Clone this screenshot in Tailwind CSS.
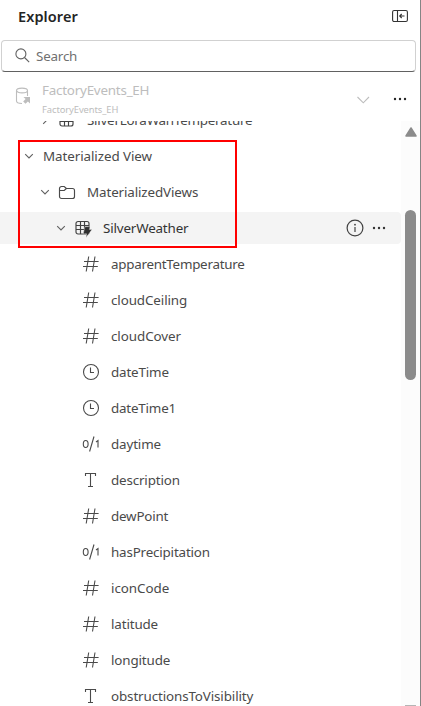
<!DOCTYPE html>
<html lang="en">
<head>
<meta charset="utf-8">
<title>Explorer</title>
<script src="https://cdn.jsdelivr.net/npm/@tailwindcss/browser@4"></script>
</head>
<body class="bg-white">
<svg class="hidden">
  <symbol id="hash" viewBox="0 0 18 18"><path d="M6.7 1.5 4.2 16.5M13 1.5 10.5 16.5M2 6.5H16.6M1 11.5H15.8" fill="none" stroke="currentColor" stroke-width="1.1"/></symbol>
  <symbol id="clock" viewBox="0 0 18 18"><circle cx="9" cy="9" r="7.5" fill="none" stroke="currentColor" stroke-width="1.1"/><path d="M8.5 4.5V9.5H12" fill="none" stroke="currentColor" stroke-width="1.1"/></symbol>
  <symbol id="bool" viewBox="0 0 18 18"><path d="M12 1.5 7.6 16.5M14 7 16 5.5V12.5" fill="none" stroke="currentColor" stroke-width="1.1"/><ellipse cx="3.7" cy="9" rx="2.4" ry="3.5" fill="none" stroke="currentColor" stroke-width="1.1"/></symbol>
  <symbol id="text" viewBox="0 0 18 18"><path d="M3.5 5V2.5H13.5V5M8.5 2.5V15.5M6 15.5H11" fill="none" stroke="currentColor" stroke-width="1.1"/></symbol>
  <symbol id="chev" viewBox="0 0 10 10"><path d="M1.2 3.2 5 7 8.8 3.2" fill="none" stroke="#616161" stroke-width="1.1"/></symbol>
  <symbol id="grid" viewBox="0 0 16 16"><path d="M3 1.5H12A2 2 0 0 1 14 3.5V12A2 2 0 0 1 12 14H3A2 2 0 0 1 1 12V3.5A2 2 0 0 1 3 1.5ZM5.5 1.5V14M9.5 1.5V14M1 5.5H14M1 9.5H14" fill="none" stroke="#424242" stroke-width="1.15"/></symbol>
  <symbol id="dots" viewBox="0 0 14 4"><circle cx="2" cy="2" r="1.2" fill="currentColor"/><circle cx="7" cy="2" r="1.2" fill="currentColor"/><circle cx="12" cy="2" r="1.2" fill="currentColor"/></symbol>
</svg>
<div class="relative flex h-[706px] w-[421px] flex-col overflow-hidden border-r border-[#858585] bg-white font-['Noto_Sans','Open_Sans',sans-serif] text-[13.4px] text-[#4a4a4a]">
  <header class="flex h-10 shrink-0 items-start justify-between pt-[6px] pr-[12px] pl-[18px]">
    <h1 class="text-[14.5px] leading-[20px] font-semibold tracking-[0.1px] whitespace-nowrap text-[#242424]">Explorer</h1>
    <svg class="mt-[3px] h-[14px] w-[16px]" viewBox="0 0 16 14" fill="none" stroke="#333" stroke-width="1.1"><rect x=".6" y="1.5" width="14.8" height="11" rx="1.5"/><path d="M5.5 1.5V12.5M12.5 7H8M9.7 5 7.7 7 9.7 9"/></svg>
  </header>
  <div class="ml-px flex h-8 w-[415px] shrink-0 items-center rounded-[4px] border border-[#d1d1d1] border-b-[#616161] pl-[13px] text-[#707070]">
    <svg class="h-4 w-4" viewBox="0 0 16 16" fill="none" stroke="#616161" stroke-width="1.1"><circle cx="5.9" cy="5.9" r="5"/><path d="M9.5 9.5 14.2 14.2"/></svg>
    <span class="ml-[5px] tracking-[-0.2px]">Search</span>
  </div>
  <div class="flex h-[49px] shrink-0 items-start pl-[15px] text-[#bdbdbd]">
    <svg class="mt-[15px] h-[18px] w-4" viewBox="0 0 16 18" fill="none" stroke="#bdbdbd" stroke-width="1.1"><ellipse cx="7" cy="3.5" rx="5.5" ry="2.4"/><path d="M1.5 3.5V14C1.5 15.4 4 16.5 7 16.5M12.5 3.5V9"/><path d="M8.5 10H15V16.5L12.9 14.4 10.5 16.8 8.2 14.5 10.6 12.1Z" fill="#bdbdbd" stroke="none"/></svg>
    <div class="ml-[11px] flex w-[300px] flex-col pt-[8px] whitespace-nowrap">
      <span class="h-[20px] leading-[20px] tracking-[-0.22px]">FactoryEvents_EH</span>
      <span class="mt-[3px] text-[9.4px] leading-[13px] tracking-[-0.08px]">FactoryEvents_EH</span>
    </div>
    <svg class="mt-[20px] ml-[14px] h-[16px] w-[15px]" viewBox="0 0 15 16" fill="none" stroke="#bdbdbd" stroke-width="1.1"><path d="M1.5 5 7.3 10.8 13 5"/></svg>
    <svg class="mt-[25px] ml-[22px] h-1 w-[14px] text-[#242424]"><use href="#dots"/></svg>
  </div>
  <main class="flex min-h-0 flex-1">
    <div class="w-[401px] shrink-0 overflow-hidden">
      <div class="-mt-[17px] flex flex-col gap-1 whitespace-nowrap *:h-8 *:shrink-0 *:items-center">
        <div class="flex pl-[40px]"><svg class="h-[10px] w-[10px] -rotate-90"><use href="#chev"/></svg><svg class="ml-[9px] h-4 w-4"><use href="#grid"/></svg><span class="ml-[12px] tracking-[-0.24px]">SilverLoraWanTemperature</span></div>
        <div class="flex pl-[24px]"><svg class="h-[10px] w-[10px]"><use href="#chev"/></svg><span class="ml-[9px] tracking-[-0.08px]">Materialized View</span></div>
        <div class="flex pl-[40px]"><svg class="h-[10px] w-[10px]"><use href="#chev"/></svg><svg class="ml-[8px] h-[17px] w-[18px]" viewBox="0 0 18 17" fill="none" stroke="currentColor" stroke-width="1.15"><path d="M1.5 4.5A2 2 0 0 1 3.5 2.5H6.2L8.4 4.5H14.5A2 2 0 0 1 16.5 6.5V12.5A2 2 0 0 1 14.5 14.5H3.5A2 2 0 0 1 1.5 12.5ZM1.5 6.5H6.2L8.4 4.5"/></svg><span class="ml-[11px] tracking-[-0.12px]">MaterializedViews</span></div>
        <div class="flex rounded-r-[4px] bg-[#f4f4f4] pl-[56px] text-[#333]"><svg class="h-[10px] w-[10px]"><use href="#chev"/></svg><span class="relative ml-[9px] h-4 w-[18px]"><svg class="h-4 w-4"><use href="#grid"/></svg><svg class="absolute top-[6px] left-[7px] h-[12px] w-[10px]" viewBox="0 0 10 12"><path d="M3 .6H8L7.3 3.6H10L4 11.6 4.6 7.8H1.2Z" fill="#303030" stroke="#f4f4f4" stroke-width=".4"/></svg></span><span class="ml-[10px] w-[200px] tracking-[-0.17px]">SilverWeather</span><svg class="ml-[42px] h-[20px] w-[20px] text-[#424242]" viewBox="0 0 20 20"><circle cx="10" cy="10" r="7.9" fill="none" stroke="currentColor" stroke-width="1.2"/><path d="M10 9V14" stroke="currentColor" stroke-width="1.2"/><circle cx="10" cy="6.7" r=".9" fill="currentColor"/></svg><svg class="ml-[7px] h-1 w-[14px]"><use href="#dots"/></svg></div>
        <div class="flex pl-[82px]"><svg class="h-[18px] w-[18px]"><use href="#hash"/></svg><span class="ml-[11px] tracking-[-0.26px]">apparentTemperature</span></div>
        <div class="flex pl-[82px]"><svg class="h-[18px] w-[18px]"><use href="#hash"/></svg><span class="ml-[11px] tracking-[-0.1px]">cloudCeiling</span></div>
        <div class="flex pl-[82px]"><svg class="h-[18px] w-[18px]"><use href="#hash"/></svg><span class="ml-[11px] tracking-[-0.06px]">cloudCover</span></div>
        <div class="flex pl-[82px]"><svg class="h-[18px] w-[18px]"><use href="#clock"/></svg><span class="ml-[11px] tracking-[-0.16px]">dateTime</span></div>
        <div class="flex pl-[82px]"><svg class="h-[18px] w-[18px]"><use href="#clock"/></svg><span class="ml-[11px] tracking-[-0.2px]">dateTime1</span></div>
        <div class="flex pl-[82px]"><svg class="h-[18px] w-[18px]"><use href="#bool"/></svg><span class="ml-[11px] tracking-[-0.14px]">daytime</span></div>
        <div class="flex pl-[82px]"><svg class="h-[18px] w-[18px]"><use href="#text"/></svg><span class="ml-[11px] tracking-[-0.16px]">description</span></div>
        <div class="flex pl-[82px]"><svg class="h-[18px] w-[18px]"><use href="#hash"/></svg><span class="ml-[11px] tracking-[-0.2px]">dewPoint</span></div>
        <div class="flex pl-[82px]"><svg class="h-[18px] w-[18px]"><use href="#bool"/></svg><span class="ml-[11px] tracking-[-0.18px]">hasPrecipitation</span></div>
        <div class="flex pl-[82px]"><svg class="h-[18px] w-[18px]"><use href="#hash"/></svg><span class="ml-[11px] tracking-[-0.06px]">iconCode</span></div>
        <div class="flex pl-[82px]"><svg class="h-[18px] w-[18px]"><use href="#hash"/></svg><span class="ml-[11px] tracking-[-0.14px]">latitude</span></div>
        <div class="flex pl-[82px]"><svg class="h-[18px] w-[18px]"><use href="#hash"/></svg><span class="ml-[11px] tracking-[-0.14px]">longitude</span></div>
        <div class="flex pl-[82px]"><svg class="h-[18px] w-[18px]"><use href="#text"/></svg><span class="ml-[11px] tracking-[-0.12px]">obstructionsToVisibility</span></div>
      </div>
    </div>
    <div class="flex flex-1 flex-col bg-[#fcfcfc] pl-[4px]">
      <svg class="mt-[6px] h-[10px] w-[12px]" viewBox="0 0 12 10"><path d="M6 1 11 9H1Z" fill="#8b8b8b" stroke="#8b8b8b" stroke-width="1.5" stroke-linejoin="round"/></svg>
      <div class="mt-[73px] h-[170px] w-[11px] rounded-full bg-[#8b8b8b]"></div>
      <div class="mt-auto h-px w-[11px] bg-[#b5b5b5]"></div>
    </div>
  </main>
  <div class="absolute top-[140px] left-[18px] h-[108px] w-[219px] border-2 border-[#ff0000]"></div>
</div>
</body>
</html>
